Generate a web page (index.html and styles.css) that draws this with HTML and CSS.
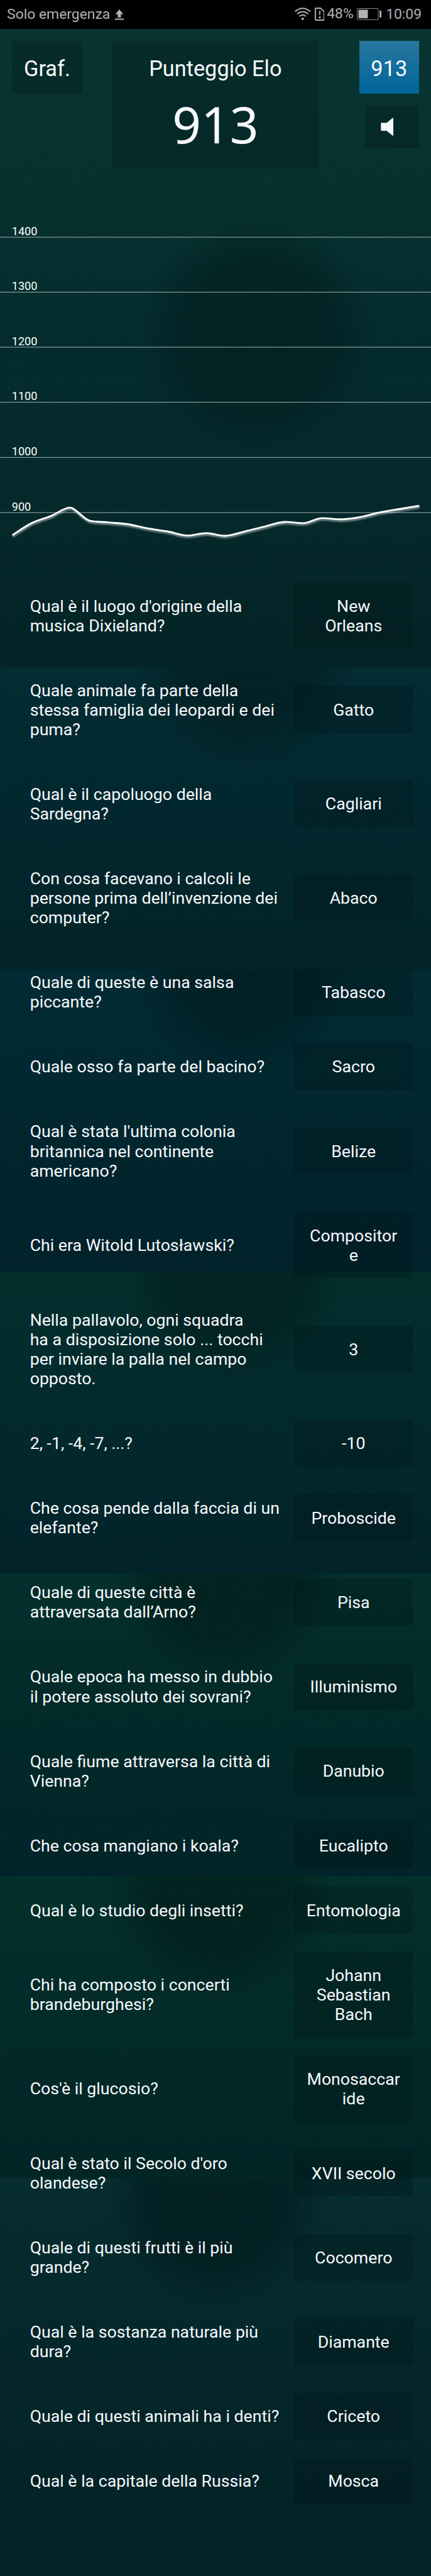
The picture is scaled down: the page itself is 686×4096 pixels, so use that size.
FILE: index.html
```
<!DOCTYPE html>
<html lang="it">
<head>
<meta charset="utf-8">
<title>Punteggio Elo</title>
<link rel="stylesheet" href="styles.css">
</head>
<body>
<div class="screen">
  <div class="backdrop" aria-hidden="true">
    <div class="tile tile-1"></div>
    <div class="tile tile-2"></div>
    <div class="tile tile-3"></div>
    <div class="tile tile-4"></div>
    <div class="tile tile-5"></div>
    <div class="tile tile-6"></div>
    <div class="tile tile-7"></div>
  </div>

  <header class="status">
    <span class="carrier">Solo emergenza</span>
    <svg class="ic-upload" viewBox="0 0 22 28"><path d="M11 0 21 12H15V20H7V12H1ZM0 23H22V26H0Z" fill="#b2b2b2"/></svg>
    <span class="spacer"></span>
    <svg class="ic-wifi" viewBox="0 0 40 32" fill="none" stroke="#b2b2b2" stroke-width="3.2" stroke-linecap="round"><path d="M2 9.2Q20-5.2 38 9.2M7.3 15.2Q20 5.2 32.700 15.2M13 21.200Q20 15.600 27 21.200"/><circle cx="20" cy="28.300" r="3.200" fill="#b2b2b2" stroke="none"/></svg>
    <svg class="ic-sim" viewBox="0 0 25 33" fill="none" stroke="#b2b2b2" stroke-width="3"><path d="M3.500 1.500H14.500L23.500 10.500V29.500Q23.500 31.500 21.500 31.500H3.500Q1.500 31.500 1.500 29.500V3.500Q1.500 1.500 3.500 1.500Z"/><path d="M12.500 9.500V17.500" stroke-linecap="round"/><circle cx="12.500" cy="24.500" r="2.600" fill="#b2b2b2" stroke="none"/></svg>
    <span class="percent">48%</span>
    <svg class="ic-battery" viewBox="0 0 62 30"><rect x=".7" y=".7" width="53" height="28" rx="3" fill="none" stroke="#b2b2b2" stroke-width="1.300"/><rect x="4" y="4" width="23.500" height="21.300" rx="1" fill="#b2b2b2"/><rect x="57" y="6" width="4.500" height="17.500" rx="1.500" fill="#b2b2b2"/></svg>
    <span class="clock">10:09</span>
  </header>

  <section class="top">
    <div class="btn graf">Graf.</div>
    <div class="score">
      <div class="score-title">Punteggio Elo</div>
      <div class="score-value">913</div>
    </div>
    <div class="side">
      <div class="btn badge">913</div>
      <div class="sound"><svg viewBox="0 0 32 46"><path d="M2.500 13H15L29.500 1Q31.500 0 31.500 2.500V43.500Q31.500 46 29.500 45L15 33H2.500Q.5 33 .5 31V15Q.5 13 2.500 13Z" fill="#f8f9fa"/></svg></div>
    </div>
  </section>

  <svg class="chart" viewBox="0 422 1080 1012">
    <g stroke="#fff" stroke-width="1">
      <path d="M0 593.500H1080M0 731H1080M0 868.700H1080M0 1006.500H1080M0 1144.500H1080M0 1282.500H1080"/>
    </g>
    <g class="axis">
      <text x="29.500" y="588.500">1400</text>
      <text x="29.500" y="726">1300</text>
      <text x="29.500" y="863.700">1200</text>
      <text x="29.500" y="1001.500">1100</text>
      <text x="29.500" y="1139.500">1000</text>
      <text x="29.500" y="1277.300">900</text>
    </g>
    <path class="curve" d="M31 1339C47 1328.600 63 1317 79 1309S112 1297.600 128 1291S160 1270 175 1270S208 1300 227 1303.500S256 1305.400 272 1307S304 1309 320 1311.600S356 1319.500 372 1322.500S404 1326.800 420 1329.700S454 1340 470 1340S501 1334 517 1334S547 1340.600 563 1340.600S597 1333.400 613 1329.700S645 1321.800 661 1318S695 1306.800 711.500 1306S743 1309 759 1309S791 1296.400 807 1296.400S839 1299.400 855 1299.400S888 1296.300 904 1293.400S936 1285.200 952 1282S986 1276.100 1002 1273.400S1034 1268 1050 1265.500"/>
  </svg>

  <main class="list">
    <div class="row"><p>Qual è il luogo d'origine della<br>musica Dixieland?</p><div class="answer">New<br>Orleans</div></div>
    <div class="row"><p>Quale animale fa parte della<br>stessa famiglia dei leopardi e dei<br>puma?</p><div class="answer">Gatto</div></div>
    <div class="row"><p>Qual è il capoluogo della<br>Sardegna?</p><div class="answer">Cagliari</div></div>
    <div class="row"><p>Con cosa facevano i calcoli le<br>persone prima dell’invenzione dei<br>computer?</p><div class="answer">Abaco</div></div>
    <div class="row"><p>Quale di queste è una salsa<br>piccante?</p><div class="answer">Tabasco</div></div>
    <div class="row"><p>Quale osso fa parte del bacino?</p><div class="answer">Sacro</div></div>
    <div class="row"><p>Qual è stata l'ultima colonia<br>britannica nel continente<br>americano?</p><div class="answer">Belize</div></div>
    <div class="row"><p>Chi era Witold Lutosławski?</p><div class="answer">Compositor<br>e</div></div>
    <div class="row"><p>Nella pallavolo, ogni squadra<br>ha a disposizione solo ... tocchi<br>per inviare la palla nel campo<br>opposto.</p><div class="answer">3</div></div>
    <div class="row"><p>2, -1, -4, -7, ...?</p><div class="answer">-10</div></div>
    <div class="row"><p>Che cosa pende dalla faccia di un<br>elefante?</p><div class="answer">Proboscide</div></div>
    <div class="row"><p>Quale di queste città è<br>attraversata dall’Arno?</p><div class="answer">Pisa</div></div>
    <div class="row"><p>Quale epoca ha messo in dubbio<br>il potere assoluto dei sovrani?</p><div class="answer">Illuminismo</div></div>
    <div class="row"><p>Quale fiume attraversa la città di<br>Vienna?</p><div class="answer">Danubio</div></div>
    <div class="row"><p>Che cosa mangiano i koala?</p><div class="answer">Eucalipto</div></div>
    <div class="row"><p>Qual è lo studio degli insetti?</p><div class="answer">Entomologia</div></div>
    <div class="row"><p>Chi ha composto i concerti<br>brandeburghesi?</p><div class="answer">Johann<br>Sebastian<br>Bach</div></div>
    <div class="row"><p>Cos'è il glucosio?</p><div class="answer">Monosaccar<br>ide</div></div>
    <div class="row"><p>Qual è stato il Secolo d'oro<br>olandese?</p><div class="answer">XVII secolo</div></div>
    <div class="row"><p>Quale di questi frutti è il più<br>grande?</p><div class="answer">Cocomero</div></div>
    <div class="row"><p>Qual è la sostanza naturale più<br>dura?</p><div class="answer">Diamante</div></div>
    <div class="row"><p>Quale di questi animali ha i denti?</p><div class="answer">Criceto</div></div>
    <div class="row"><p>Qual è la capitale della Russia?</p><div class="answer">Mosca</div></div>
  </main>
</div>
</body>
</html>
```

FILE: styles.css
```
/* 1rem = 100 design pixels of a 1080-wide layout */
html { font-size: 63.5531px; }
* { box-sizing: border-box; }
body {
  margin: 0;
  background: #032126;
  color: #f8faff;
  font-family: Roboto, "Liberation Sans", sans-serif;
}
.screen {
  position: relative;
  width: 686px;
  height: 4096px;
  overflow: hidden;
}

/* repeated wallpaper behind the page */
.backdrop {
  position: absolute;
  inset: 0;
  z-index: -1;
  display: flex;
  flex-direction: column;
}
.tile { height: 7.558rem; flex: none; }
.tile-1 {
  height: 16.7rem;
  background:
    radial-gradient(circle at 6.45rem 8.4rem, rgba(2,28,30,.6) 0, rgba(2,28,30,.55) 1.9rem, rgba(2,28,30,.25) 2.45rem, rgba(2,28,30,0) 3rem),
    linear-gradient(#083532 0, #07312f 30%, #042c2e 52%, #05282b 78%, #032426 100%);
}
.tile-2 {
  background:
    radial-gradient(circle at 6.2rem -.25rem, rgba(3,29,32,.7) 0, rgba(3,29,32,.65) 1.6rem, rgba(3,29,32,.3) 2.2rem, rgba(3,29,32,0) 2.8rem),
    linear-gradient(#032c33, #02282f 45%, #032428);
}
.tile-3 {
  background:
    radial-gradient(circle at 6.05rem -.1rem, rgba(0,28,33,.7) 0, rgba(0,28,33,.65) 1.6rem, rgba(0,28,33,.3) 2.2rem, rgba(0,28,33,0) 2.8rem),
    linear-gradient(#022b33, #01272f 45%, #01222b);
}
.tile-4 {
  background:
    radial-gradient(circle at 5.85rem 0rem, rgba(2,30,30,.7) 0, rgba(2,30,30,.65) 1.7rem, rgba(2,30,30,.3) 2.25rem, rgba(2,30,30,0) 2.8rem),
    linear-gradient(#03302d, #022a2d 40%, #02232a);
}
.tile-5 {
  background:
    radial-gradient(circle at 5.65rem 0rem, rgba(1,29,27,.7) 0, rgba(1,29,27,.65) 1.7rem, rgba(1,29,27,.3) 2.3rem, rgba(1,29,27,0) 2.9rem),
    linear-gradient(#03302c, #022a29 45%, #012428);
}
.tile-6 {
  background:
    radial-gradient(circle at 5.5rem .3rem, rgba(1,29,27,.7) 0, rgba(1,29,27,.65) 1.7rem, rgba(1,29,27,.3) 2.3rem, rgba(1,29,27,0) 2.9rem),
    linear-gradient(#03302b, #022b29 45%, #022526);
}
.tile-7 {
  height: auto;
  flex: 1;
  background:
    radial-gradient(circle at 5.4rem .5rem, rgba(2,28,31,.75) 0, rgba(2,28,31,.7) 1.7rem, rgba(2,28,31,.3) 2.25rem, rgba(2,28,31,0) 2.8rem),
    linear-gradient(#062d2f, #04262a 50%, #032126);
}

/* status bar */
.status {
  display: flex;
  align-items: flex-start;
  height: .72rem;
  padding: 0 .235rem 0 .175rem;
  background: #000;
  color: #b2b2b2;
  font-size: .36rem;
  line-height: .42rem;
}
.status svg { display: block; flex: none; }
.spacer { flex: 1; }
.carrier { margin-top: .163rem; }
.ic-upload { width: .22rem; height: .28rem; margin: .235rem 0 0 .13rem; }
.ic-wifi { width: .4rem; height: .32rem; margin-top: .195rem; }
.ic-sim { width: .25rem; height: .33rem; margin: .19rem 0 0 .1rem; }
.percent { margin: .137rem 0 0 .06rem; }
.ic-battery { width: .62rem; height: .3rem; margin: .21rem 0 0 .09rem; }
.clock { margin: .163rem 0 0 .1rem; }

/* header controls */
.top {
  display: flex;
  align-items: flex-start;
  height: 3.5rem;
  padding: .3rem .3rem 0;
}
.btn {
  height: 1.33rem;
  font-size: .54rem;
  line-height: 1.39rem;
  text-align: center;
  background: rgba(0,15,18,.25);
}
.graf { width: 1.76rem; }
.score {
  width: 5.17rem;
  height: 3.2rem;
  margin-left: .75rem;
  padding-top: .35rem;
  background: rgba(0,15,18,.25);
  text-align: center;
}
.score-title { font-size: .54rem; line-height: .71rem; }
.score-value {
  margin-top: .21rem;
  font: 1.26rem/1.6rem "Noto Sans", "Open Sans", sans-serif;
}
.side {
  display: flex;
  flex-direction: column;
  align-items: flex-end;
  gap: .3rem;
  margin-left: auto;
}
.badge {
  width: 1.5rem;
  background: linear-gradient(#27779d, #00659b);
}
.sound {
  display: flex;
  width: 1.35rem;
  height: 1.05rem;
  padding: .295rem 0 0 .395rem;
  background: rgba(0,15,18,.25);
}
.sound svg { width: .32rem; height: .46rem; }

/* rating history */
.chart { display: block; width: 10.8rem; height: 10.125rem; }
.axis { fill: #fff; font-size: 28.500px; }
.curve {
  fill: none;
  stroke: #fff;
  stroke-width: 4.5;
  filter: drop-shadow(1px 4px 2px rgba(255,255,255,.5));
}

/* answered questions */
.list { font-size: .42rem; line-height: .49rem; }
.row {
  display: flex;
  align-items: center;
  justify-content: space-between;
  padding: .2255rem .45rem .2255rem .75rem;
}
.row p,
.answer {
  margin: 0;
  padding: .355rem 0 .325rem;
  white-space: nowrap;
}
.answer {
  width: 2.98rem;
  background: rgba(0,15,18,.25);
  text-align: center;
}
```
